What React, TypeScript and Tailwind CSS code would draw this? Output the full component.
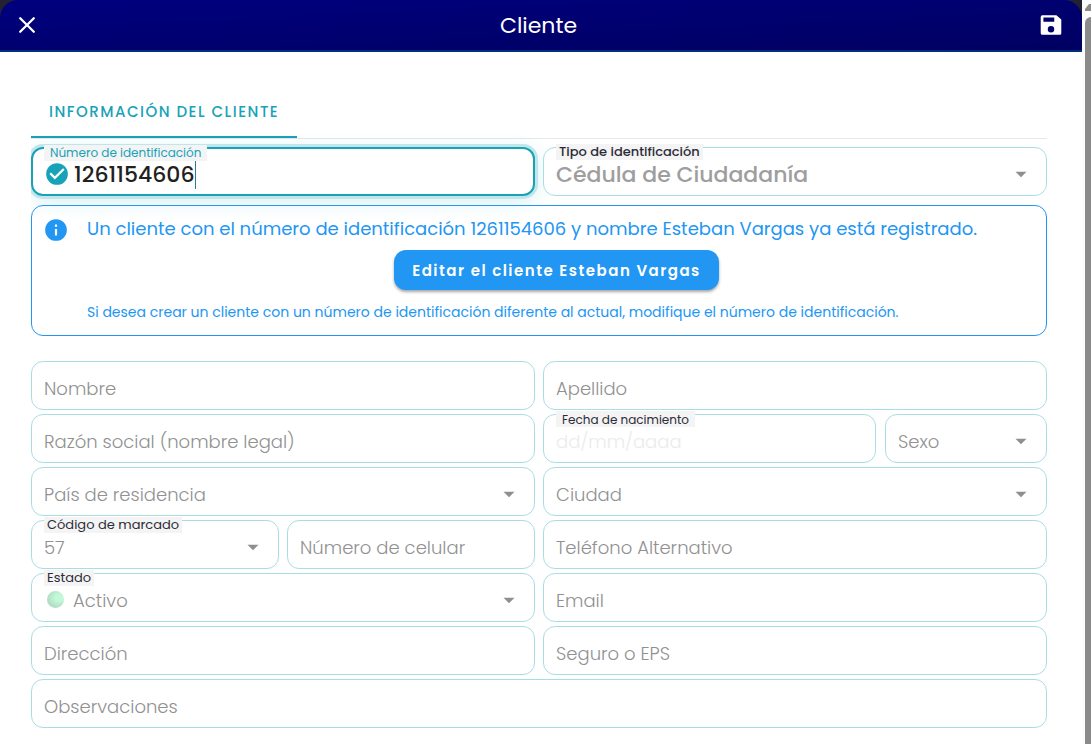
import React from 'react';

interface FieldProps {
  id: string;
  label: string;
  type?: string;
}

const boxClass = 'flex h-[49px] w-full min-w-0 rounded-xl border border-[#a9dde4] bg-white';
const textClass = 'text-[18px] font-light text-[#919191]';

const TextField: React.FC<FieldProps> = ({ id, label, type = 'text' }) => (
  <input
    id={id}
    type={type}
    aria-label={label}
    placeholder={label}
    className={`${boxClass} ${textClass} px-3 pt-[5px] placeholder:text-[#919191] outline-none`}
  />
);

interface SelectFieldProps {
  id: string;
  value: string;
  label?: string;
  strong?: boolean;
  dot?: boolean;
}

const Arrow = () => (
  <svg viewBox="0 0 24 24" className="pointer-events-none absolute right-[14px] top-[15px] h-6 w-6" fill="#8f8f8f">
    <path d="M6.5 9.8h11L12 15.3z" />
  </svg>
);

const FloatingLabel = ({ htmlFor, children, className = '' }: { htmlFor: string; children: string; className?: string }) => (
  <label htmlFor={htmlFor} className={`absolute h-4 bg-[#f4f4f4] leading-4 whitespace-nowrap ${className}`}>
    {children}
  </label>
);

const SelectField: React.FC<SelectFieldProps> = ({ id, value, label, strong = false, dot = false }) => (
  <div className="relative min-w-0">
    <select
      id={id}
      aria-label={label ? undefined : value}
      className={`${boxClass} appearance-none pt-[5px] pr-10 outline-none ${dot ? 'pl-[41px]' : 'pl-3'} ${
        strong ? 'text-[22px] font-medium text-[#9e9e9e]' : textClass
      }`}
    >
      <option>{value}</option>
    </select>
    {dot && (
      <span className="absolute left-4 top-[18px] h-[17px] w-[17px] rounded-full bg-radial-[at_70%_40%] from-[#c2fad7] from-20% to-[#a6cbbc]" />
    )}
    {label && (
      <FloatingLabel
        htmlFor={id}
        className={`-top-[3px] left-[13px] px-[3px] text-[13px] text-[#2c2c38] ${strong ? 'font-medium' : ''}`}
      >
        {label}
      </FloatingLabel>
    )}
    <Arrow />
  </div>
);

const Header = () => (
  <header className="flex h-[52px] items-center justify-between rounded-t-[18px] border-b-2 border-[#032e7c] bg-linear-to-br from-[#00007f] to-[#000062] pr-[18px] pl-[15px] text-white">
    <button type="button" aria-label="Cerrar">
      <svg viewBox="0 0 24 24" className="h-6 w-6" fill="none" stroke="currentColor" strokeWidth="2.3" strokeLinecap="round">
        <path d="M5.2 5.2l13.6 13.6M18.8 5.2L5.2 18.8" />
      </svg>
    </button>
    <h1 className="pt-[2px] text-[22px] leading-8">Cliente</h1>
    <button type="button" aria-label="Guardar">
      <svg viewBox="0 0 24 24" className="h-[26px] w-[26px]" fill="currentColor">
        <path d="M15 9H5V5h10m-3 14a3 3 0 1 1 0-6 3 3 0 0 1 0 6m5-16H4a1.5 1.5 0 0 0-1.5 1.5v15A1.5 1.5 0 0 0 4 21h16a1.5 1.5 0 0 0 1.5-1.5V7z" />
      </svg>
    </button>
  </header>
);

const ExistingClientAlert = () => (
  <section className="relative mt-[9px] flex rounded-xl border border-[#2196f3] pt-[9px] pr-3 pb-[11px] pl-[11px] text-[#2196f3]">
    <svg viewBox="0 0 24 24" className="mt-[2px] h-[26px] w-[26px] shrink-0" fill="currentColor">
      <path d="M13 9h-2V7h2m0 10h-2v-6h2M12 2a10 10 0 1 0 0 20 10 10 0 0 0 0-20z" />
    </svg>
    <div className="ml-[18px] flex-1">
      <p className="text-[18px] leading-7">
        Un cliente con el número de identificación 1261154606 y nombre Esteban Vargas ya está registrado.
      </p>
      <div className="mt-[7px] flex justify-center pr-2">
        <button
          type="button"
          className="h-10 rounded-xl bg-[#2196f3] px-[18px] pt-[2px] text-[15px] font-semibold tracking-widest text-white shadow-[0_2px_3px_rgba(0,0,0,0.35)]"
        >
          Editar el cliente Esteban Vargas
        </button>
      </div>
      <p className="mt-[10px] text-[14px] leading-6">
        Si desea crear un cliente con un número de identificación diferente al actual, modifique el número de identificación.
      </p>
    </div>
  </section>
);

const IdentificationField = () => (
  <div className="relative flex h-[49px] items-center rounded-xl border-2 border-[#17a2b8] bg-white pt-1 pl-[11px] shadow-[0_0_0_3px_#c0e6ec,0_4px_20px_rgba(23,162,184,0.2)]">
    <svg viewBox="0 0 24 24" className="h-[26px] w-[26px] shrink-0" fill="#17a2b8">
      <path d="M12 2a10 10 0 1 0 0 20 10 10 0 0 0 0-20zm-2 15l-5-5 1.41-1.41L10 14.17l7.59-7.59L19 8z" />
    </svg>
    <input
      id="identificacion"
      type="text"
      defaultValue="1261154606"
      className="field-sizing-content ml-1 pt-[2px] text-[22px] font-medium text-[#212121] outline-none"
    />
    <span className="h-[30px] w-px bg-[#2b7f8e]" />
    <FloatingLabel htmlFor="identificacion" className="-top-1 left-[11px] px-[6px] text-[12px] text-[#17a2b8]">
      Número de identificación
    </FloatingLabel>
  </div>
);

const Scrollbar = () => (
  <div className="flex w-[9px] shrink-0 flex-col items-end bg-[#fcfcfc]">
    <svg viewBox="0 0 6 7" className="mt-1 h-[7px] w-[6px]" fill="#8a8a8a">
      <path d="M0 7V5l4-5h2v7z" />
    </svg>
    <span className="mt-[6px] w-[6px] flex-1 rounded-tl-md bg-[#8a8a8a]" />
  </div>
);

const App = () => (
  <div className="flex min-h-screen bg-white font-['Poppins','Inter',sans-serif]">
    <div className="flex min-w-0 flex-1 flex-col">
      <div className="bg-[#222230]">
        <Header />
      </div>
      <main className="pt-[34px] pr-[35px] pb-4 pl-[31px]">
        <div role="tablist" className="flex border-b border-[#e6e8ea]">
          <button
            type="button"
            role="tab"
            aria-selected="true"
            className="h-[52px] border-b-2 border-[#17a2b8] px-[18px] pt-[2px] text-[15px] font-medium tracking-widest text-[#17a2b8]"
          >
            INFORMACIÓN DEL CLIENTE
          </button>
        </div>
        <form className="overflow-x-clip pt-2">
          <div className="grid grid-cols-2 gap-2">
            <IdentificationField />
            <SelectField id="tipo" label="Tipo de identificación" value="Cédula de Ciudadanía" strong />
          </div>
          <ExistingClientAlert />
          <div className="mt-[25px] grid grid-cols-2 gap-x-2 gap-y-1">
            <TextField id="nombre" label="Nombre" />
            <TextField id="apellido" label="Apellido" />
            <TextField id="razon" label="Razón social (nombre legal)" />
            <div className="grid grid-cols-[37fr_18fr] gap-[9px]">
              <div className="relative min-w-0">
                <input
                  id="nacimiento"
                  type="text"
                  placeholder="dd/mm/aaaa"
                  className={`${boxClass} ${textClass} px-3 pt-[5px] placeholder:text-[#ebebeb] outline-none`}
                />
                <FloatingLabel htmlFor="nacimiento" className="-top-[3px] left-[13px] px-[6px] pt-px text-[12px] text-[#2c2c38]">
                  Fecha de nacimiento
                </FloatingLabel>
              </div>
              <SelectField id="sexo" value="Sexo" />
            </div>
            <SelectField id="pais" value="País de residencia" />
            <SelectField id="ciudad" value="Ciudad" />
            <div className="grid grid-cols-2 gap-2">
              <SelectField id="codigo" label="Código de marcado" value="57" />
              <TextField id="celular" label="Número de celular" type="tel" />
            </div>
            <TextField id="telefono" label="Teléfono Alternativo" type="tel" />
            <SelectField id="estado" label="Estado" value="Activo" dot />
            <TextField id="email" label="Email" type="email" />
            <TextField id="direccion" label="Dirección" />
            <TextField id="seguro" label="Seguro o EPS" />
            <div className="col-span-2">
              <TextField id="observaciones" label="Observaciones" />
            </div>
          </div>
        </form>
      </main>
    </div>
    <Scrollbar />
  </div>
);

export default App;
